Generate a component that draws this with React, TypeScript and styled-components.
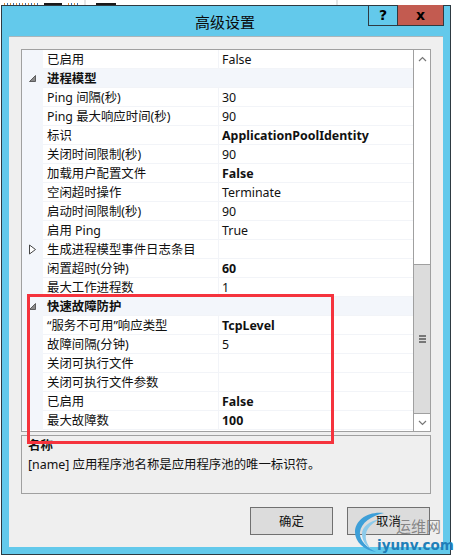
import styled, { createGlobalStyle } from "styled-components";

const FONT = `"Noto Sans", "Noto Sans CJK SC", sans-serif`;

const GlobalStyle = createGlobalStyle`
  html, body {
    margin: 0;
    padding: 0;
    background: #fff;
  }
  * {
    box-sizing: border-box;
  }
`;

const Page = styled.div`
  position: relative;
  width: 458px;
  height: 560px;
  overflow: hidden;
  background: #fff;
  font-family: ${FONT};
  color: #111;
`;

const BackStrip = styled.div`
  display: flex;
  height: 5px;
  overflow: hidden;
`;

const BackCell = styled.div<{ $width: number }>`
  display: flex;
  align-items: flex-end;
  gap: 6px;
  width: ${(p) => p.$width}px;
  height: 5px;
  padding-left: 4px;
  border-right: 2px solid #e6e6e6;
`;

const Speck = styled.div<{ $width: number; $dark?: boolean }>`
  width: ${(p) => p.$width}px;
  height: 2px;
  background: ${(p) =>
    p.$dark
      ? "#1a1a1a"
      : "repeating-linear-gradient(90deg, #d98a3a 0 1px, #fff 1px 3px, #3a6fb0 3px 4px, #fff 4px 6px)"};
`;

const Window = styled.div`
  display: flex;
  flex-direction: column;
  width: 450px;
  height: 550px;
  margin-left: 1px;
  border: 1px solid #2e3a42;
  background: #63c9eb;
`;

const TitleBar = styled.div`
  position: relative;
  display: flex;
  justify-content: center;
  height: 30px;
  flex-shrink: 0;
  font-size: 15px;
  line-height: 30px;
  color: #0a0a0a;
`;

const TitleText = styled.span`
  margin-left: -2px;
  margin-top: 1px;
`;

const CaptionButtons = styled.div`
  position: absolute;
  top: -1px;
  right: 6px;
  display: flex;
  height: 21px;
  border: 1px solid #2e3a42;
  border-top: none;
`;

const CaptionButton = styled.div<{ $close?: boolean }>`
  display: flex;
  align-items: center;
  justify-content: center;
  width: ${(p) => (p.$close ? 46 : 28)}px;
  background: ${(p) => (p.$close ? "#c35b50" : "transparent")};
  border-left: ${(p) => (p.$close ? "1px solid #2e3a42" : "none")};
  font-family: "DejaVu Sans", sans-serif;
  font-size: 14px;
  font-weight: 700;
  line-height: 1;
  color: #000;
`;

const Panel = styled.div`
  display: flex;
  flex-direction: column;
  flex: 1;
  margin: 0 7px 7px 7px;
  padding: 12px 12px 0 12px;
  background: #efefef;
  border-top: 1px solid #a9b6bc;
`;

const Grid = styled.div`
  display: flex;
  height: 383px;
  flex-shrink: 0;
  border: 1px solid #a0a0a0;
  background: #fff;
`;

const Rows = styled.div`
  display: flex;
  flex-direction: column;
  flex: 1;
  min-width: 0;
`;

const Row = styled.div<{ $category?: boolean }>`
  display: grid;
  grid-template-columns: 21px 175px 1fr;
  height: 19px;
  flex-shrink: 0;
  font-size: 12.4px;
  line-height: 19px;
  background: ${(p) => (p.$category ? "#f3f6fb" : "#fff")};
  font-weight: ${(p) => (p.$category ? 700 : 400)};
  box-shadow: inset 0 -1px 0 #f2f4f8;
`;

const Gutter = styled.div`
  display: flex;
  align-items: center;
  justify-content: center;
  background: #f3f6fb;
`;

const NameCell = styled.div`
  padding-left: 4px;
  white-space: nowrap;
`;

const ValueCell = styled.div<{ $bold?: boolean }>`
  padding-left: 3px;
  font-weight: ${(p) => (p.$bold ? 700 : 400)};
  border-left: 1px solid #f2f4f8;
  white-space: nowrap;
`;

const ScrollBar = styled.div`
  display: flex;
  flex-direction: column;
  width: 17px;
  flex-shrink: 0;
  border-left: 1px solid #a0a0a0;
  background: #fff;
`;

const ScrollButton = styled.div`
  display: flex;
  align-items: center;
  justify-content: center;
  height: 17px;
  flex-shrink: 0;
  background: #fff;
`;

const ScrollTrack = styled.div`
  height: 197px;
  flex-shrink: 0;
`;

const ScrollThumb = styled.div`
  display: flex;
  flex-direction: column;
  flex: 1;
  align-items: center;
  justify-content: center;
  gap: 1px;
  background: #dcdcdc;
  border-top: 1px solid #a0a0a0;
  border-bottom: 1px solid #a0a0a0;
`;

const GripLine = styled.div`
  width: 7px;
  height: 2px;
  background: #777;
`;

const Description = styled.div`
  height: 59px;
  margin-top: 3px;
  padding: 0 6px;
  flex-shrink: 0;
  border: 1px solid #a0a0a0;
  font-size: 12.4px;
  line-height: 19px;
`;

const DescriptionTitle = styled.div`
  font-weight: 700;
`;

const Footer = styled.div`
  display: flex;
  justify-content: flex-end;
  gap: 14px;
  margin-top: 13px;
  padding-right: 1px;
`;

const FooterButton = styled.div`
  display: flex;
  align-items: center;
  justify-content: center;
  width: 83px;
  height: 28px;
  border: 1px solid #707070;
  background: #dcdcdc;
  font-size: 12.4px;
`;

const Highlight = styled.div`
  position: absolute;
  left: 27px;
  top: 294px;
  width: 307px;
  height: 150px;
  border: 3px solid #f5333d;
  pointer-events: none;
`;

const Watermark = styled.div`
  position: absolute;
  left: 354px;
  top: 512px;
  width: 104px;
  height: 48px;
  pointer-events: none;
`;

const WatermarkSwirl = styled.svg`
  position: absolute;
  left: 0;
  top: 0;
`;

const WatermarkName = styled.div`
  position: absolute;
  left: 42px;
  top: 4px;
  font-size: 15px;
  line-height: 20px;
  color: rgba(110, 110, 110, 0.8);
`;

const WatermarkDomain = styled.div`
  position: absolute;
  left: 23px;
  top: 23px;
  font-family: "DejaVu Sans", sans-serif;
  font-size: 13.5px;
  font-weight: 700;
  line-height: 20px;
  color: #1f7fb8;
`;

type RowData = {
  name: string;
  value?: string;
  bold?: boolean;
  kind?: "category" | "collapsed";
};

const rows: RowData[] = [
  { name: "已启用", value: "False" },
  { name: "进程模型", kind: "category" },
  { name: "Ping 间隔(秒)", value: "30" },
  { name: "Ping 最大响应时间(秒)", value: "90" },
  { name: "标识", value: "ApplicationPoolIdentity", bold: true },
  { name: "关闭时间限制(秒)", value: "90" },
  { name: "加载用户配置文件", value: "False", bold: true },
  { name: "空闲超时操作", value: "Terminate" },
  { name: "启动时间限制(秒)", value: "90" },
  { name: "启用 Ping", value: "True" },
  { name: "生成进程模型事件日志条目", kind: "collapsed" },
  { name: "闲置超时(分钟)", value: "60", bold: true },
  { name: "最大工作进程数", value: "1" },
  { name: "快速故障防护", kind: "category" },
  { name: "“服务不可用”响应类型", value: "TcpLevel", bold: true },
  { name: "故障间隔(分钟)", value: "5" },
  { name: "关闭可执行文件" },
  { name: "关闭可执行文件参数" },
  { name: "已启用", value: "False", bold: true },
  { name: "最大故障数", value: "100", bold: true },
];

const ExpandedIcon = () => (
  <svg width="9" height="9" viewBox="0 0 9 9">
    <path d="M7.5 1.5V7.5H1.5Z" fill="#8a8a8a" stroke="#444" strokeWidth="0.8" />
  </svg>
);

const CollapsedIcon = () => (
  <svg width="9" height="11" viewBox="0 0 9 11">
    <path d="M1.5 1V10L7.5 5.5Z" fill="#fff" stroke="#444" strokeWidth="1" />
  </svg>
);

const App = () => {
  return (
    <Page>
      <GlobalStyle />
      <BackStrip>
        <BackCell $width={86}>
          <Speck $width={34} />
          <Speck $width={18} $dark />
          <Speck $width={10} />
        </BackCell>
        <BackCell $width={252}>
          <Speck $width={0} />
          <Speck $width={20} $dark />
        </BackCell>
      </BackStrip>
      <Window>
        <TitleBar>
          <TitleText>高级设置</TitleText>
          <CaptionButtons>
            <CaptionButton>?</CaptionButton>
            <CaptionButton $close>x</CaptionButton>
          </CaptionButtons>
        </TitleBar>
        <Panel>
          <Grid>
            <Rows>
              {rows.map((row, i) => (
                <Row key={i} $category={row.kind === "category"}>
                  <Gutter>
                    {row.kind === "category" && <ExpandedIcon />}
                    {row.kind === "collapsed" && <CollapsedIcon />}
                  </Gutter>
                  <NameCell>{row.name}</NameCell>
                  {row.kind === "category" ? (
                    <div />
                  ) : (
                    <ValueCell $bold={row.bold}>{row.value}</ValueCell>
                  )}
                </Row>
              ))}
            </Rows>
            <ScrollBar>
              <ScrollButton>
                <svg width="9" height="6" viewBox="0 0 9 6">
                  <path d="M1 5L4.5 1.5L8 5" fill="none" stroke="#777" strokeWidth="1.2" />
                </svg>
              </ScrollButton>
              <ScrollTrack />
              <ScrollThumb>
                <GripLine />
                <GripLine />
                <GripLine />
              </ScrollThumb>
              <ScrollButton>
                <svg width="9" height="6" viewBox="0 0 9 6">
                  <path d="M1 1L4.5 4.5L8 1" fill="none" stroke="#777" strokeWidth="1.2" />
                </svg>
              </ScrollButton>
            </ScrollBar>
          </Grid>
          <Description>
            <DescriptionTitle>名称</DescriptionTitle>
            <div>[name] 应用程序池名称是应用程序池的唯一标识符。</div>
          </Description>
          <Footer>
            <FooterButton>确定</FooterButton>
            <FooterButton>取消</FooterButton>
          </Footer>
        </Panel>
      </Window>
      <Highlight />
      <Watermark>
        <WatermarkSwirl width="44" height="44" viewBox="0 0 44 44">
          <path d="M30 1C14 -1 1 8 1 20C1 30 10 38 22 40C12 35 5 28 6 20C7 11 17 4 30 1Z" fill="#3d9fd8" />
          <path d="M26 7C15 9 8 15 8 22C8 28 11 33 17 37C13 32 11 27 12 22C13 16 18 11 26 7Z" fill="#8ccaea" />
        </WatermarkSwirl>
        <WatermarkName>运维网</WatermarkName>
        <WatermarkDomain>iyunv.com</WatermarkDomain>
      </Watermark>
    </Page>
  );
};

export default App;
